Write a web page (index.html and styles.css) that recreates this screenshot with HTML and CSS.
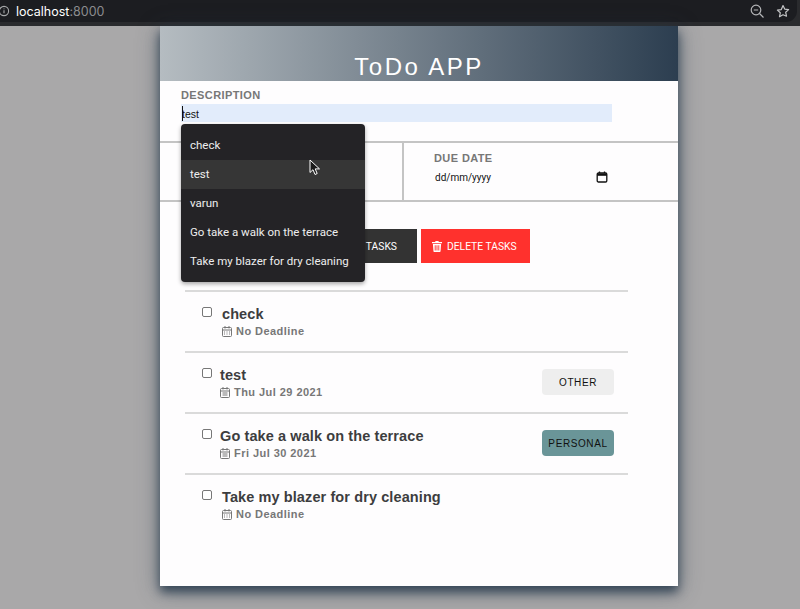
FILE: index.html
```html
<!DOCTYPE html>
<html lang="en">
<head>
    <meta charset="utf-8">
    <title>ToDo APP</title>
    <link rel="stylesheet" href="styles.css">
</head>
<body>
<div class="browser-bar">
    <div class="address-pill">
        <svg class="info-icon" width="14" height="14" viewBox="0 0 14 14" fill="none" stroke="#a8a9ab" stroke-width="1.1">
            <circle cx="4" cy="7" r="4.6"/>
            <path d="M4 6.2v3M4 4.4v.9"/>
        </svg>
        <span class="url">localhost<span class="url-port">:8000</span></span>
        <svg class="zoom-icon" width="16" height="16" viewBox="0 0 16 16" fill="none" stroke="#b5b6b8" stroke-width="1.2">
            <circle cx="7" cy="7" r="4.8"/>
            <path d="M10.5 10.5l4 4M4.8 7h4.4"/>
        </svg>
        <svg class="star-icon" width="14" height="14" viewBox="0 0 14 14" fill="none" stroke="#c4c5c7" stroke-width="1.2" stroke-linejoin="round">
            <path d="M7 1.5l1.7 3.6 3.9.5-2.9 2.7.8 3.9L7 10.8l-3.5 1.9.8-3.9-2.9-2.7 3.9-.5z"/>
        </svg>
    </div>
</div>
<div class="page">
    <main class="card">
        <header class="card-header">
            <h1>ToDo APP</h1>
        </header>
        <section class="desc-row">
            <label class="field-label" for="desc">Description</label>
            <div class="desc-wrap">
                <input class="desc-input" id="desc" type="text" value="test">
                <span class="caret"></span>
                <ul class="menu">
                    <li>check</li>
                    <li class="-hover">test</li>
                    <li>varun</li>
                    <li>Go take a walk on the terrace</li>
                    <li>Take my blazer for dry cleaning</li>
                </ul>
            </div>
        </section>
        <section class="options-row">
            <div class="option-cell">
                <div class="field-label">Category</div>
            </div>
            <div class="option-cell -due">
                <div class="field-label">Due Date</div>
                <div class="date-field">
                    <span>dd/mm/yyyy</span>
                    <svg width="12" height="12" viewBox="0 0 12 12" fill="none" stroke="#111" stroke-width="1.3">
                        <rect x="1.2" y="2" width="9.6" height="9" rx="1.2"/>
                        <path d="M1.2 3.6h9.6" stroke-width="2.4"/>
                        <path d="M3.5.5v1.5M8.5.5v1.5"/>
                    </svg>
                </div>
            </div>
        </section>
        <section class="actions">
            <button type="button" class="btn -dark">Add Tasks</button>
            <button type="button" class="btn -red">
                <svg width="10" height="11" viewBox="0 0 11 12" fill="#fff">
                    <path d="M4 0h3l.6 1H11v1.3H0V1h3.4zM1 3.2h9l-.6 8.1a.8.8 0 0 1-.8.7H2.400a.8.8 0 0 1-.8-.7zM3 4.500v6h1v-6zM5 4.500v6h1v-6zM7 4.500v6h1v-6z" fill-rule="evenodd"/>
                </svg>
                Delete Tasks
            </button>
        </section>
        <ul class="task-list">
            <li class="task">
                <span class="check"></span>
                <div class="task-body">
                    <div class="task-title">check</div>
                    <div class="task-meta">
                        <svg class="cal" width="10" height="11" viewBox="0 0 10 11" fill="none" stroke="#777" stroke-width="1">
                            <rect x=".5" y="1.500" width="9" height="9" rx="1"/>
                            <path d="M.5 4h9M3 0v2.500M7 0v2.500M2 6h1M4.500 6h1M7 6h1M2 8h1M4.500 8h1M7 8h1"/>
                        </svg>
                        No Deadline
                    </div>
                </div>
            </li>
            <li class="task">
                <span class="check"></span>
                <div class="task-body -dated">
                    <div class="task-title">test</div>
                    <div class="task-meta">
                        <svg class="cal" width="10" height="11" viewBox="0 0 10 11" fill="none" stroke="#777" stroke-width="1">
                            <rect x=".5" y="1.500" width="9" height="9" rx="1"/>
                            <path d="M.5 4h9M3 0v2.500M7 0v2.500M2.500 6h5M2.500 8h5"/>
                        </svg>
                        Thu Jul 29 2021
                    </div>
                </div>
                <span class="badge">OTHER</span>
            </li>
            <li class="task">
                <span class="check"></span>
                <div class="task-body -dated">
                    <div class="task-title">Go take a walk on the terrace</div>
                    <div class="task-meta">
                        <svg class="cal" width="10" height="11" viewBox="0 0 10 11" fill="none" stroke="#777" stroke-width="1">
                            <rect x=".5" y="1.500" width="9" height="9" rx="1"/>
                            <path d="M.5 4h9M3 0v2.500M7 0v2.500M2.500 6h5M2.500 8h5"/>
                        </svg>
                        Fri Jul 30 2021
                    </div>
                </div>
                <span class="badge -personal">PERSONAL</span>
            </li>
            <li class="task">
                <span class="check"></span>
                <div class="task-body">
                    <div class="task-title">Take my blazer for dry cleaning</div>
                    <div class="task-meta">
                        <svg class="cal" width="10" height="11" viewBox="0 0 10 11" fill="none" stroke="#777" stroke-width="1">
                            <rect x=".5" y="1.500" width="9" height="9" rx="1"/>
                            <path d="M.5 4h9M3 0v2.500M7 0v2.500M2 6h1M4.500 6h1M7 6h1M2 8h1M4.500 8h1M7 8h1"/>
                        </svg>
                        No Deadline
                    </div>
                </div>
            </li>
        </ul>
    </main>
</div>
<svg class="pointer" width="12" height="17" viewBox="0 0 12 17">
    <path d="M1 1v12.500l3-2.800 2 4.800 2.200-1-2-4.600h4.300z" fill="#1a1a1a" stroke="#fff" stroke-width="1"/>
</svg>
</body>
</html>
```

FILE: styles.css
```css
* {
    box-sizing: border-box;
    margin: 0;
    padding: 0;
    border: 0;
}
html, body {
    width: 100%;
    height: 100%;
    overflow: hidden;
}
body {
    font-family: "Liberation Sans", Arial, sans-serif;
    background: #a9a8a9;
    display: flex;
    flex-direction: column;
}
ul {
    list-style: none;
}
.browser-bar {
    height: 26px;
    flex: none;
    background: #2a2b2e;
}
.address-pill {
    height: 22px;
    margin-right: 3px;
    padding-left: 0;
    background: #1c1d21;
    border-radius: 0 0 11px 0;
    display: flex;
    align-items: center;
    color: #fff;
    font-size: 13px;
}
.url {
    margin-left: 2px;
    font-family: Inter, sans-serif;
    font-size: 12.500px;
}
.url-port {
    color: #8b8c8f;
}
.zoom-icon {
    margin-left: auto;
    margin-right: 11px;
}
.star-icon {
    margin-right: 7px;
}
.page {
    flex: 1;
    padding-left: 160px;
}
.card {
    width: 518px;
    height: 560px;
    background: #fefdfe;
    box-shadow: 0 6px 10px rgba(44, 62, 80, .9), 0 4px 22px rgba(44, 62, 80, .45);
    position: relative;
}
.card-header {
    height: 55px;
    background: linear-gradient(to right, #b5bcc1, #2c3e50);
    display: flex;
    align-items: flex-end;
    justify-content: center;
}
.card-header h1 {
    color: #fff;
    font-size: 24px;
    font-weight: normal;
    letter-spacing: 2.500px;
    line-height: 28px;
}
.field-label {
    display: block;
    font-size: 11px;
    font-weight: bold;
    letter-spacing: .4px;
    line-height: 13px;
    color: #777;
    text-transform: uppercase;
}
.desc-row {
    height: 60px;
    padding: 8px 66px 0 21px;
}
.desc-wrap {
    position: relative;
    margin-top: 2px;
}
.desc-input {
    display: block;
    width: 100%;
    height: 18px;
    background: #e2ecfb;
    font-family: "Liberation Sans", Arial, sans-serif;
    font-size: 10.500px;
    color: #111;
    padding: 2px 0 0 1px;
    outline: none;
}
.caret {
    position: absolute;
    left: 1px;
    top: 2px;
    width: 1px;
    height: 15px;
    background: #111;
}
.menu {
    position: absolute;
    top: 20px;
    left: 0;
    width: 184px;
    padding: 7px 0 6px;
    background: #242326;
    border-radius: 4px;
    box-shadow: 0 2px 4px rgba(0, 0, 0, .35);
    color: #eee;
    font-family: Roboto, sans-serif;
    font-size: 11.500px;
    z-index: 10;
}
.menu li {
    height: 29px;
    line-height: 29px;
    padding-left: 9px;
}
.menu .-hover {
    background: #363636;
}
.options-row {
    height: 61px;
    border-top: 2px solid #c4c4c4;
    border-bottom: 2px solid #c4c4c4;
    display: flex;
}
.option-cell {
    width: 244px;
    border-right: 2px solid #c4c4c4;
    padding: 9px 0 0 21px;
}
.option-cell.-due {
    flex: 1;
    width: auto;
    border-right: 0;
    padding-left: 30px;
}
.date-field {
    margin-top: 6px;
    width: 174px;
    padding-left: 1px;
    display: flex;
    justify-content: space-between;
    align-items: center;
    font-family: Roboto, sans-serif;
    font-size: 10px;
    color: #111;
}
.actions {
    margin-top: 27px;
    padding-left: 147px;
    display: flex;
    gap: 4px;
}
.btn {
    height: 34px;
    padding: 0 20px;
    color: #fff;
    font-family: Roboto, sans-serif;
    font-size: 10.300px;
    text-transform: uppercase;
    white-space: nowrap;
    display: flex;
    align-items: center;
    gap: 5px;
}
.btn svg {
    flex: none;
}
.btn.-dark {
    width: 110px;
    background: #333;
    justify-content: flex-end;
}
.btn.-red {
    width: 109px;
    padding: 0 11px;
    background: #ff312d;
}
.task-list {
    margin: 27px 50px 0 25px;
}
.task {
    height: 61px;
    border-top: 2px solid #dadada;
    padding: 14px 14px 0 17px;
    display: flex;
    align-items: flex-start;
}
.check {
    flex: none;
    width: 10px;
    height: 10px;
    margin-top: 1px;
    border: 1px solid #777;
    border-radius: 2px;
    background: #fff;
}
.task-body {
    margin-left: 10px;
}
.task-body.-dated {
    margin-left: 8px;
}
.task-title {
    font-size: 14.500px;
    font-weight: bold;
    letter-spacing: .1px;
    line-height: 16px;
    color: #3d3d3f;
}
.task-meta {
    margin-top: 2px;
    font-size: 11px;
    font-weight: bold;
    letter-spacing: .45px;
    line-height: 14px;
    color: #777;
    display: flex;
    align-items: center;
    gap: 4px;
}
.badge {
    flex: none;
    margin-left: auto;
    margin-top: 2px;
    width: 72px;
    height: 26px;
    line-height: 27px;
    text-align: center;
    background: #eeeeee;
    border-radius: 4px;
    font-size: 10px;
    letter-spacing: .6px;
    color: #111;
}
.badge.-personal {
    background: #6a9598;
}
.pointer {
    position: absolute;
    left: 309px;
    top: 159px;
    z-index: 20;
}
```
